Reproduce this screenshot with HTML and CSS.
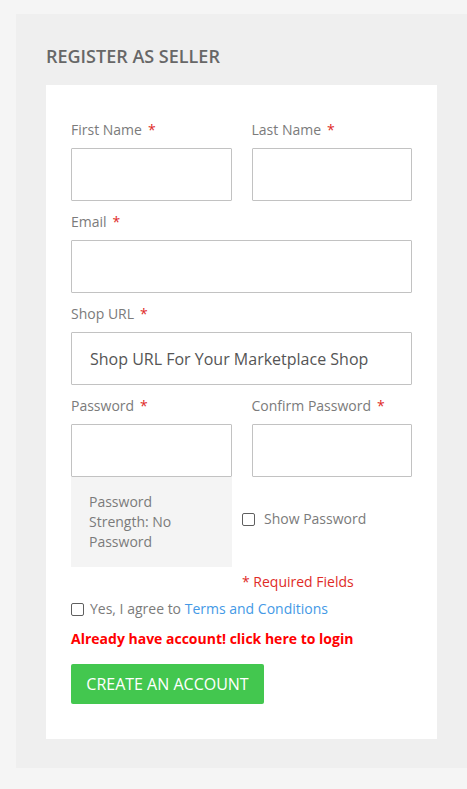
FILE: index.html
```html
<!DOCTYPE html>
<html lang="en">
<head>
<meta charset="utf-8">
<title>Register as Seller</title>
<link rel="stylesheet" href="styles.css">
</head>
<body>
<div class="page">
  <div class="panel">
    <h2 class="title">REGISTER AS SELLER</h2>
    <form class="card">
      <div class="grid2">
        <div class="field">
          <label class="label required">First Name</label>
          <input class="input" type="text">
        </div>
        <div class="field">
          <label class="label required">Last Name</label>
          <input class="input" type="text">
        </div>
      </div>
      <div class="field">
        <label class="label required">Email</label>
        <input class="input" type="email">
      </div>
      <div class="field">
        <label class="label required">Shop URL</label>
        <input class="input input-lg" type="text" placeholder="Shop URL For Your Marketplace Shop">
      </div>
      <div class="grid2">
        <div class="field flush">
          <label class="label required">Password</label>
          <input class="input" type="password">
        </div>
        <div class="field flush">
          <label class="label required">Confirm Password</label>
          <input class="input" type="password">
        </div>
      </div>
      <div class="pw-row">
        <div class="strength"><span class="strength-text">Password Strength: No Password</span></div>
        <label class="check show-pw"><span class="box"></span><span>Show Password</span></label>
      </div>
      <div class="req-note">* Required Fields</div>
      <label class="check terms"><span class="box"></span><span>Yes, I agree to <a class="link" href="#">Terms and Conditions</a></span></label>
      <div class="login-note">Already have account! click here to login</div>
      <button type="button" class="btn">CREATE AN ACCOUNT</button>
    </form>
  </div>
</div>
</body>
</html>
```

FILE: styles.css
```css
* { box-sizing: border-box; }
html, body { margin: 0; padding: 0; }
body {
  background: #f5f5f5;
  font-family: "Open Sans", "Liberation Sans", Arial, sans-serif;
  color: #777;
}
.page {
  padding: 14px 0 0 16px;
}
.panel {
  background: #efefef;
  padding: 30px 30px 29px 30px;
}
.title {
  margin: 0 0 17px 0;
  font-size: 18px;
  line-height: 24px;
  font-weight: 600;
  color: #676767;
}
.card {
  background: #fff;
  padding: 35px 25px 35px 25px;
  display: flex;
  flex-direction: column;
}
.grid2 {
  display: grid;
  grid-template-columns: 1fr 1fr;
  column-gap: 20px;
}
.field {
  display: flex;
  flex-direction: column;
  margin-bottom: 11px;
}
.field.flush { margin-bottom: 0; }
.label {
  font-size: 14px;
  line-height: 20px;
  color: #7b7b7b;
  margin-bottom: 8px;
}
.label.required::after {
  content: "*";
  color: #e02b27;
  margin-left: 6px;
}
.input {
  height: 53px;
  border: 1px solid #c2c2c2;
  border-radius: 1px;
  background: #fff;
  padding: 0 18px;
  font-family: inherit;
  font-size: 16px;
  color: #555;
  width: 100%;
  outline: none;
}
.input::placeholder { color: #555; opacity: 1; }
.pw-row {
  display: flex;
  align-items: center;
}
.strength {
  width: 161px;
  height: 90px;
  background: #f4f4f4;
  padding: 15px 18px;
  font-size: 14px;
  line-height: 20px;
  color: #7b7b7b;
}
.strength-text {
  display: block;
  width: 105px;
}
.check {
  display: flex;
  align-items: center;
  font-size: 14px;
  line-height: 20px;
  color: #7b7b7b;
}
.box {
  width: 13px;
  height: 13px;
  border: 1px solid #5f5f5f;
  border-radius: 2px;
  background: #fff;
  flex: none;
}
.show-pw {
  margin-left: 10px;
  margin-top: -6px;
}
.show-pw .box { margin-right: 9px; }
.req-note {
  margin: 5px 0 0 171px;
  font-size: 14px;
  line-height: 20px;
  color: #e02b27;
}
.terms {
  margin-top: 7px;
}
.terms .box { margin: 1px 6px 0 0; }
.link {
  color: #4499e6;
  text-decoration: none;
}
.login-note {
  margin-top: 10px;
  font-size: 14px;
  line-height: 20px;
  font-weight: 700;
  color: #f00;
}
.btn {
  align-self: flex-start;
  margin-top: 15px;
  width: 193px;
  height: 40px;
  background: #43c74f;
  border: none;
  border-radius: 2px;
  color: #fff;
  font-family: inherit;
  font-size: 16px;
  padding: 0;
  white-space: nowrap;
  cursor: pointer;
}
```
